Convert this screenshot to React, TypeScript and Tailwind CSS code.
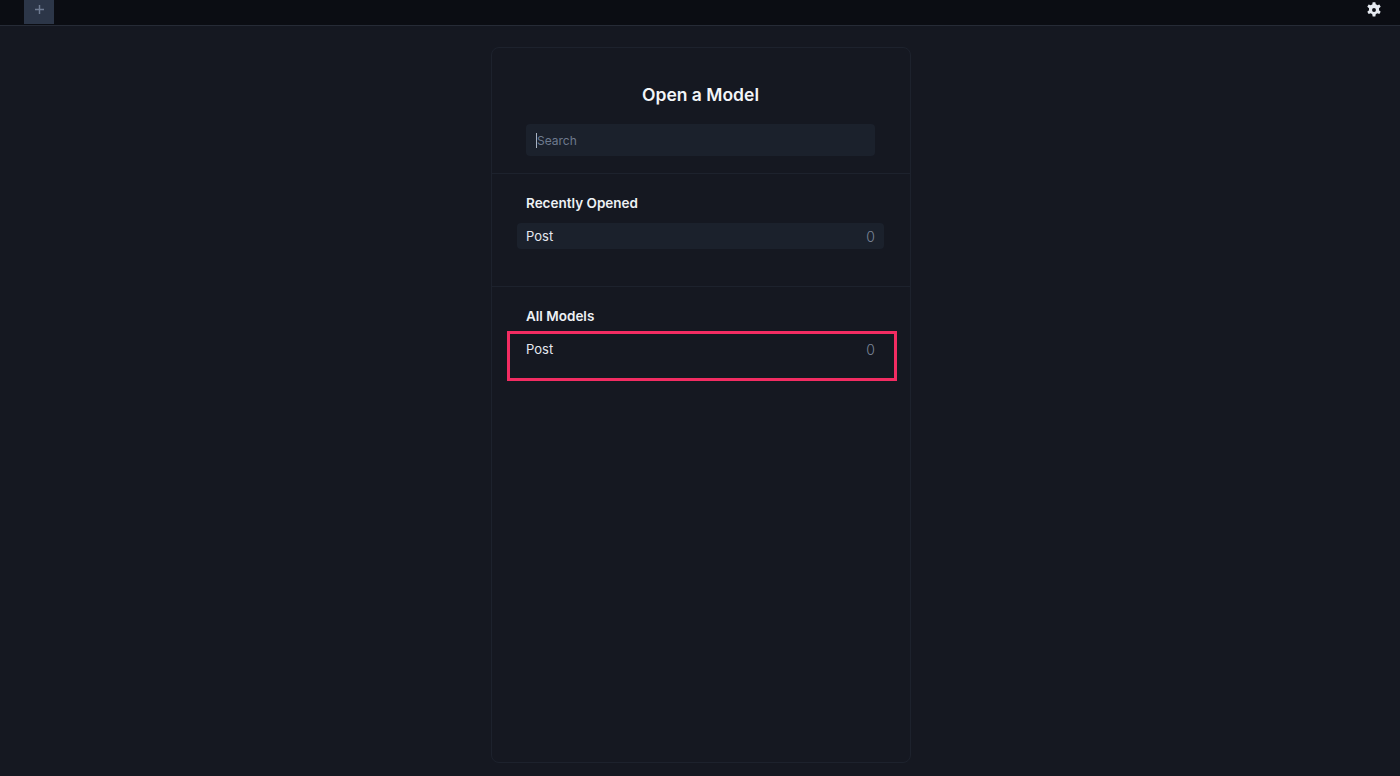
const Gear = () => (
  <svg viewBox="0 0 24 24" className="h-[18px] w-[18px] fill-[#e5e9f0]">
    <path
      fillRule="evenodd"
      d="M13.8 1.5h-3.6l-.5 3a7.6 7.6 0 0 0-2 1.15L4.85 4.6 3.05 7.7l2.35 1.95a7.7 7.7 0 0 0 0 2.7L3.05 14.3l1.8 3.1 2.85-1.05a7.6 7.6 0 0 0 2 1.15l.5 3h3.6l.5-3a7.6 7.6 0 0 0 2-1.15l2.85 1.05 1.8-3.1-2.35-1.95a7.7 7.7 0 0 0 0-2.7l2.35-1.95-1.8-3.1-2.85 1.05a7.6 7.6 0 0 0-2-1.15zM12 9.4a2.6 2.6 0 1 1 0 5.2 2.6 2.6 0 0 1 0-5.2z"
    />
  </svg>
);

const PlusIcon = () => (
  <svg viewBox="0 0 10 10" className="h-[9px] w-[9px] stroke-[#6f7c92]" strokeWidth="1.6">
    <path d="M5 0v10M0 5h10" />
  </svg>
);

const ModelRow = ({ active }: { active?: boolean }) => (
  <div
    className={`mx-[-9px] flex h-[26px] items-center justify-between rounded px-[9px] pt-px text-[13px] ${active ? 'bg-[#1b212c]' : ''}`}
  >
    <span className="text-[#e5e9f0]">Post</span>
    <span className="text-[14px] font-light text-[#7a8496]">0</span>
  </div>
);

const App = () => {
  return (
    <div className="flex h-[776px] flex-col overflow-hidden bg-[#151821] font-['Inter',sans-serif]">
      <div className="flex h-[26px] shrink-0 items-stretch justify-between border-b border-[#262b36] bg-[#0b0d13] pl-6 pr-[17px]">
        <div className="mb-px flex w-[30px] items-center justify-center bg-[#2c3648] pb-[5px]">
          <PlusIcon />
        </div>
        <div className="flex items-center pb-[5px]">
          <Gear />
        </div>
      </div>

      <div className="flex flex-1 justify-center pt-[21px]">
        <div className="ml-[2px] flex h-[716px] w-[420px] flex-col rounded-lg border border-[#1d222d]">
          <div className="border-b border-[#1d222d] pb-[17px] pl-[34px] pr-[35px] pt-[34px]">
            <h1 className="text-center text-[17.5px] leading-[26px] font-semibold text-[#f3f5f8]">
              Open a Model
            </h1>
            <div className="mt-[16px] flex h-[32px] items-center rounded bg-[#1b212c] pl-[10px] text-[12px] text-[#6e7a8e]">
              <span className="h-[15px] w-px bg-[#a9b3c2]" />
              <span className="pt-px">Search</span>
            </div>
          </div>

          <div className="h-[113px] border-b border-[#1d222d] pl-[34px] pr-[35px] pt-[19px]">
            <h2 className="text-[13.5px] leading-[20px] font-semibold text-[#eef1f5]">
              Recently Opened
            </h2>
            <div className="mt-[10px]">
              <ModelRow active />
            </div>
          </div>

          <div className="pl-[34px] pr-[35px] pt-[19px]">
            <h2 className="text-[13.5px] leading-[20px] font-semibold text-[#eef1f5]">
              All Models
            </h2>
            <div className="relative mt-[10px]">
              <ModelRow />
              <div className="absolute left-[-19px] top-[-5px] h-[50px] w-[390px] border-[3px] border-[#f22c62]" />
            </div>
          </div>
        </div>
      </div>
    </div>
  );
};

export default App;
